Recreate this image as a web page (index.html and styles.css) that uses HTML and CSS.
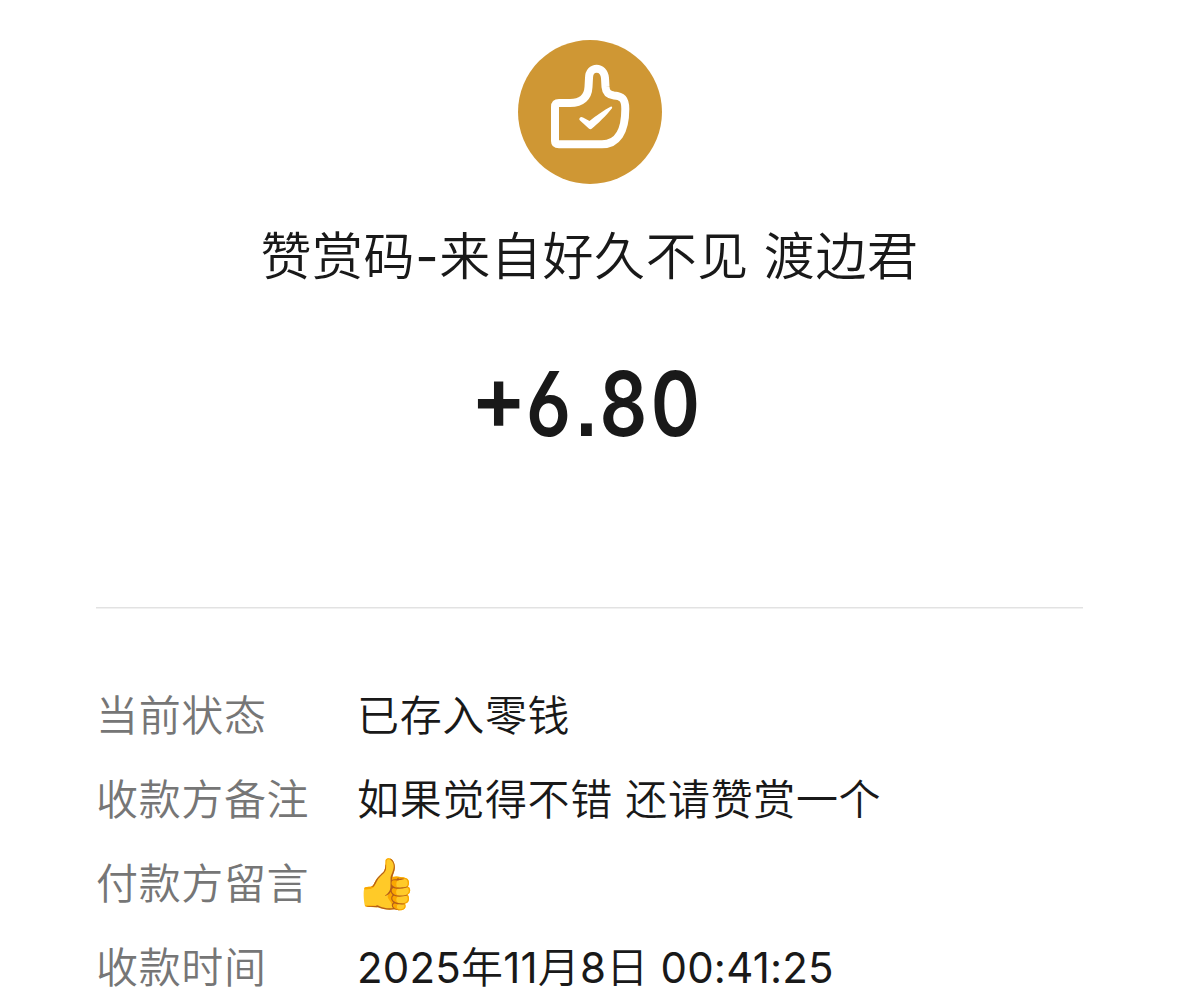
FILE: index.html
```html
<!DOCTYPE html>
<html lang="zh-CN">
<head>
    <meta charset="UTF-8">
    <title>账单详情</title>
    <meta name="viewport" content="width=device-width, initial-scale=1.0">
    <link rel="stylesheet" href="styles.css">
</head>
<body>
    <div class="bill">
        <div class="header">
            <svg class="logo" viewBox="0 0 144 144" fill="none" xmlns="http://www.w3.org/2000/svg">
                <circle cx="72" cy="72" r="72" fill="#CF9734"/>
                <path d="M41 63H52C64 63 70 57 70.500 47L71 38C71 25.500 86 25.500 87 38L87.500 47C88 53 91 55 96 55.500C104 56 107.300 59 107.300 69C107.300 92 99 104.300 84 104.300H41C38 104.300 37 103 37 101V67C37 64.500 38 63 41 63Z" stroke="#fff" stroke-width="8" stroke-linejoin="round"/>
                <path d="M61.300 79.500C61.300 77.500 63 76 65 77.500L71.500 81C78 76 86 70 93 66.500C94 66 94.500 67.500 94 68.300C88 76 80 83.500 74 88.500C73 89.500 71.800 89.500 70.800 88.500L62 80.500Z" fill="#fff"/>
            </svg>
            <h1 class="title">赞赏码<span class="latin">-</span>来自好久不见 渡边君</h1>
            <p class="amount"><span class="sign">+</span>6.80</p>
        </div>

        <dl class="details">
            <div class="row">
                <dt>当前状态</dt>
                <dd>已存入零钱</dd>
            </div>
            <div class="row">
                <dt>收款方备注</dt>
                <dd>如果觉得不错 还请赞赏一个</dd>
            </div>
            <div class="row">
                <dt>付款方留言</dt>
                <dd class="emoji">👍</dd>
            </div>
            <div class="row">
                <dt>收款时间</dt>
                <dd class="time"><span class="latin">2025</span>年<span class="latin">11</span>月<span class="latin">8</span>日 <span class="latin">00:41:25</span></dd>
            </div>
        </dl>
    </div>
</body>
</html>
```
FILE: styles.css
```css
* {
    box-sizing: border-box;
    margin: 0;
    padding: 0;
}

body {
    font-family: Inter, "Noto Sans CJK SC", sans-serif;
    font-weight: 350;
    background-color: #fff;
    color: #191919;
    overflow: hidden;
}

.bill {
    padding: 40px 96px 0;
}

.header {
    height: 568px;
    text-align: center;
    border-bottom: 1px solid #e2e2e2;
    box-shadow: 0 1px 0 #f1f1f1;
}

.logo {
    display: block;
    width: 144px;
    height: 144px;
    margin: 0 auto 37px;
}

.title {
    font-size: 51px;
    font-weight: 350;
    line-height: 72px;
    letter-spacing: 0.6px;
}

.latin {
    font-weight: 400;
}

.amount {
    font-family: Inter, sans-serif;
    font-size: 90px;
    font-weight: 600;
    font-feature-settings: "ss01", "ss07", "case";
    line-height: 100px;
    letter-spacing: 4px;
    margin-top: 61px;
    transform: scaleX(0.83);
}

.amount .sign {
    display: inline-block;
    letter-spacing: 0;
    transform: scaleX(1.13);
    transform-origin: 80% center;
}

.details {
    padding-top: 66px;
}

.row {
    display: flex;
    font-size: 42px;
    line-height: 84px;
    height: 84px;
    letter-spacing: 0.65px;
}

.row dt {
    width: 261px;
    color: #767676;
}

.row .emoji {
    font-size: 50px;
    line-height: 82px;
    margin-left: -2px;
}

.row .time {
    letter-spacing: 0.2px;
}
```
